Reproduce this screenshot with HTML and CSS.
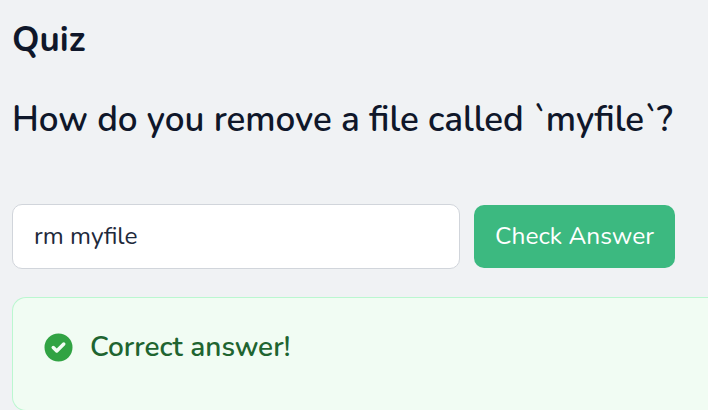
FILE: index.html
```html
<!DOCTYPE html>
<html lang="en">
<head>
<meta charset="utf-8">
<title>Quiz</title>
<link rel="stylesheet" href="styles.css">
</head>
<body>
<main class="quiz">
  <h1 class="title">Quiz</h1>
  <h2 class="question">How do you remove a file called `myfile`?</h2>
  <form class="answer">
    <div class="field">rm myfile</div>
    <button class="check" type="button">Check Answer</button>
  </form>
  <section class="result">
    <svg class="icon" viewBox="0 0 20 20"><path fill="currentColor" fill-rule="evenodd" d="M10 18a8 8 0 100-16 8 8 0 000 16zm3.707-9.293a1 1 0 00-1.414-1.414L9 10.586 7.707 9.293a1 1 0 00-1.414 1.414l2 2a1 1 0 001.414 0l4-4z"/></svg>
    <p class="message">Correct answer!</p>
  </section>
</main>
</body>
</html>
```
FILE: styles.css
```css
* { box-sizing: border-box; }
body { margin: 0; background: #f0f2f4; color: #0f172a; font-family: Nunito, "Open Sans", sans-serif; }
.quiz { padding: 16px 0 0 12px; }
h1, h2, p { margin: 0; }
.title { font-size: 35px; line-height: 48px; font-weight: 700; }
.question { margin-top: 32px; font-size: 35px; line-height: 48px; font-weight: 600; white-space: nowrap; }
.answer { display: flex; gap: 14px; margin: 60px 0 0; }
.field { width: 448px; height: 65px; padding: 0 21px; border: 1px solid #d1d5db; border-radius: 10px; background: #fff; color: #1e293b; font-size: 24.5px; line-height: 63px; }
.check { width: 201px; height: 63px; margin-top: 1px; padding: 0 0 2px; border: 0; border-radius: 10px; background: #3cb980; color: #fff; font: 24.5px/60px Nunito, "Open Sans", sans-serif; }
.result { display: flex; margin-top: 28px; height: 114px; padding: 32px 28px; border: 1px solid #bbf7d0; border-right: 0; border-radius: 14px 0 0 14px; background: #f1fcf3; }
.icon { width: 35px; height: 35px; color: #31a343; }
.message { margin-left: 14px; font-size: 28px; line-height: 34px; font-weight: 600; color: #206430; }
```
